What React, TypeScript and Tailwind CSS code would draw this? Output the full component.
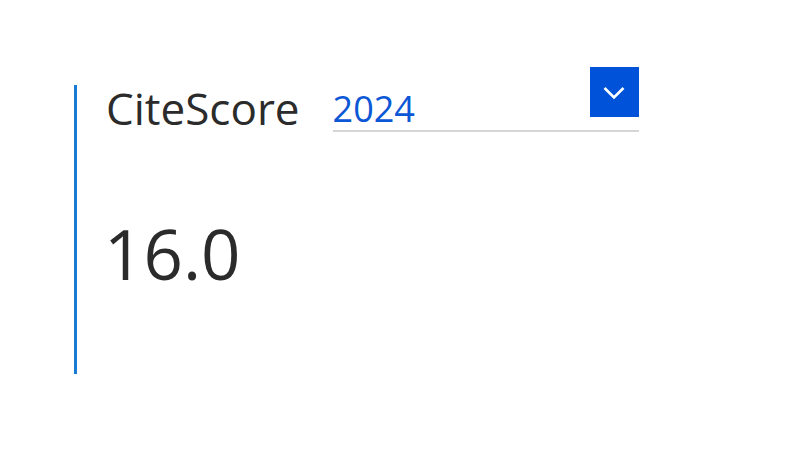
import React from 'react';

export default function App() {
  return (
    <div
      className="min-h-screen w-full bg-white pt-[85px] pl-[74px]"
      style={{ fontFamily: '"Open Sans", "Noto Sans", sans-serif' }}
    >
      <div className="flex h-[289px] flex-col border-l-[3px] border-[#1a7bd2] pl-[29px]">
        <div className="flex items-end">
          <span className="pb-[2px] text-[44px] leading-none text-[#2b2b2b]">CiteScore</span>
          <div className="relative -mt-[18px] ml-[33px] flex h-[65px] w-[306px] items-end border-b-2 border-[#d6d6d6] pb-[3px]">
            <span className="text-[36px] leading-none text-[#0b57d6]">2024</span>
            <button className="absolute right-0 top-0 flex h-[50px] w-[49px] items-center justify-center bg-[#0052d9]">
              <svg width="24" height="15" viewBox="0 0 24 15" fill="none">
                <path d="M2.5 3l9.5 9.5 9.5-9.5" stroke="white" strokeWidth="2.6" />
              </svg>
            </button>
          </div>
        </div>
        <div className="-ml-[2px] mt-[87px] text-[69px] leading-none text-[#2b2b2b]">16.0</div>
      </div>
    </div>
  );
}
